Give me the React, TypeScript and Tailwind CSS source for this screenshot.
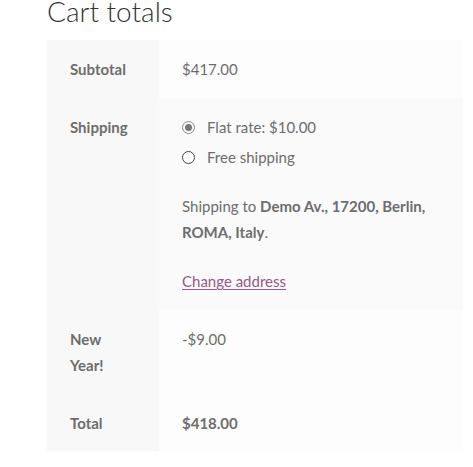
export default function App() {
  const font = { fontFamily: 'Lato, "Noto Sans", sans-serif' };
  return (
    <div className="bg-white w-[473px] h-[467px] overflow-hidden text-[#6d6d6d]" style={font}>
      <div className="pl-[47px] w-[463px]">
        <h2 className="text-[28px] font-light leading-[30px] text-[#333333] -mt-[4px] mb-[14px]">Cart totals</h2>
        <table className="w-[416px] border-collapse text-[15px] leading-[26px]">
          <tbody>
            <tr>
              <th className="w-[112px] bg-[#f8f8f8] px-[23px] py-4 text-left align-top font-bold">Subtotal</th>
              <td className="bg-[#fdfdfd] px-[23px] py-4 align-top">$417.00</td>
            </tr>
            <tr>
              <th className="bg-[#f8f8f8] px-[23px] py-4 text-left align-top font-bold">Shipping</th>
              <td className="bg-[#fafafa] px-[23px] py-4 align-top">
                <ul className="flex flex-col gap-1 mb-[23px]">
                  <li className="flex items-center gap-[12px]">
                    <span className="w-[13px] h-[13px] rounded-full border border-[#8a8a8a] flex items-center justify-center">
                      <span className="w-[7px] h-[7px] rounded-full bg-[#777777]" />
                    </span>
                    <span>Flat rate: $10.00</span>
                  </li>
                  <li className="flex items-center gap-[12px]">
                    <span className="w-[13px] h-[13px] rounded-full border border-[#444444] bg-white" />
                    <span>Free shipping</span>
                  </li>
                </ul>
                <p className="mb-[23px]">
                  Shipping to <strong className="font-bold">Demo Av., 17200, Berlin, ROMA, Italy</strong>.
                </p>
                <a href="#" className="text-[#96588a] underline underline-offset-2">Change address</a>
              </td>
            </tr>
            <tr>
              <th className="bg-[#f8f8f8] px-[23px] py-4 text-left align-top font-bold">
                New
                <br />
                Year!
              </th>
              <td className="bg-[#fdfdfd] px-[23px] py-4 align-top">-$9.00</td>
            </tr>
            <tr>
              <th className="bg-[#f8f8f8] px-[23px] pt-4 pb-[15px] text-left align-top font-bold">Total</th>
              <td className="bg-[#fdfdfd] px-[23px] pt-4 pb-[15px] align-top">
                <strong className="font-bold">$418.00</strong>
              </td>
            </tr>
          </tbody>
        </table>
      </div>
    </div>
  );
}
